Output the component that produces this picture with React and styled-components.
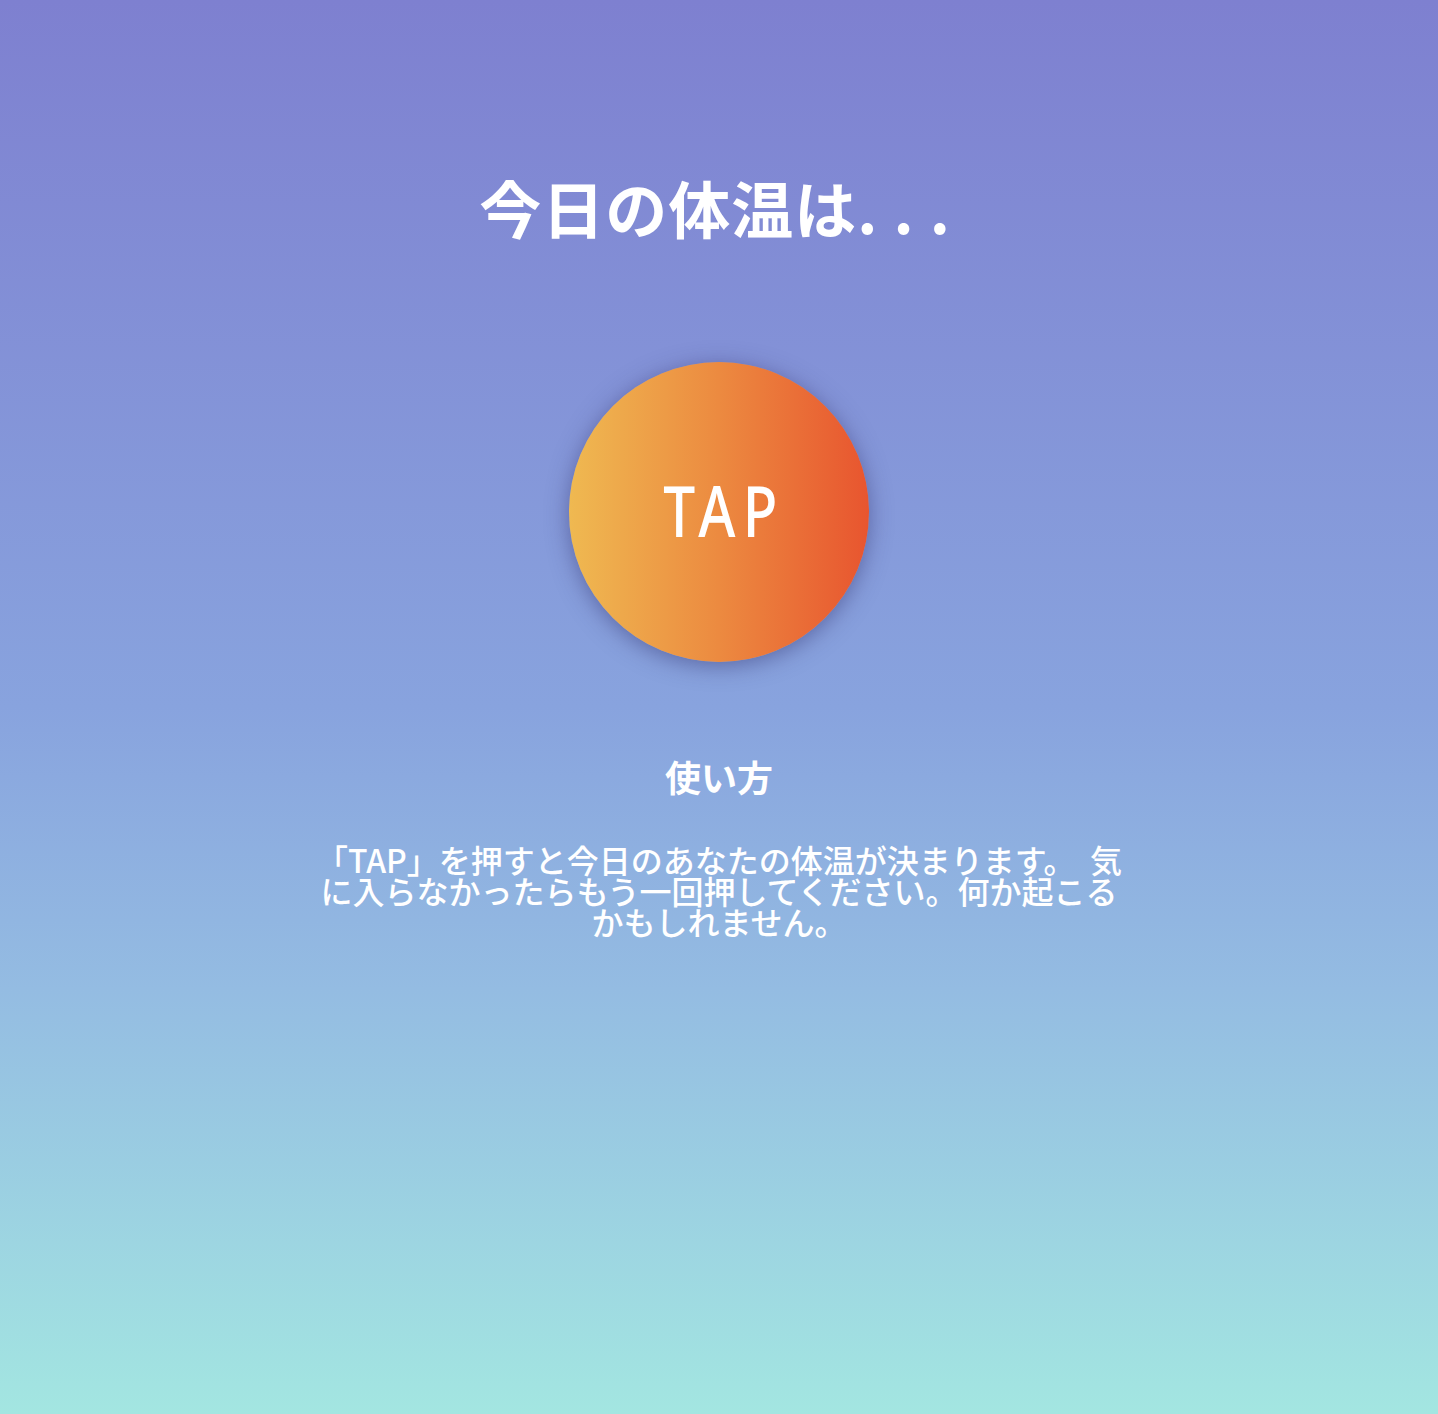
import React from 'react';
import styled, { createGlobalStyle } from 'styled-components';

const GlobalStyle = createGlobalStyle`
  html, body {
    margin: 0;
    padding: 0;
  }

  body {
    font-family: 'Noto Sans CJK JP', 'Noto Sans', sans-serif;
    color: #fff;
  }
`;

const Page = styled.main`
  min-height: 100vh;
  box-sizing: border-box;
  padding-top: 167px;
  display: flex;
  flex-direction: column;
  align-items: center;
  background: linear-gradient(180deg, #7e80d0 0%, #88a3de 50%, #94bce2 70%, #a3e6e1 100%);
`;

const Title = styled.h1`
  margin: 0 0 0 -8px;
  font-size: 62px;
  line-height: 80px;
  font-weight: 700;
  letter-spacing: 1px;
`;

const TapButton = styled.button`
  margin-top: 115px;
  width: 300px;
  height: 300px;
  display: flex;
  align-items: center;
  justify-content: center;
  border: none;
  border-radius: 50%;
  background: linear-gradient(90deg, #efb951 0%, #ec8a40 50%, #e8552f 100%);
  box-shadow: 0 4px 22px rgba(50, 50, 110, 0.5);
  color: #fff;
  cursor: pointer;
`;

const TapLabel = styled.span`
  display: inline-block;
  font-family: 'Noto Sans', sans-serif;
  font-size: 71px;
  font-weight: 500;
  line-height: 1;
  letter-spacing: 9px;
  margin: -6px -9px 0 0;
  transform: scaleX(0.8);
`;

const Heading = styled.h2`
  margin: 88px 0 0;
  font-size: 36px;
  line-height: 52px;
  font-weight: 700;
`;

const Text = styled.p`
  margin: 42px 0 0;
  width: 820px;
  font-size: 32px;
  line-height: 31px;
  font-weight: 500;
  text-align: center;
`;

export default function App() {
  return (
    <Page>
      <GlobalStyle />
      <Title>今日の体温は. . .</Title>
      <TapButton>
        <TapLabel>TAP</TapLabel>
      </TapButton>
      <Heading>使い方</Heading>
      <Text>
        「TAP」を押すと今日のあなたの体温が決まります。&nbsp; 気に入らなかったらもう一回押してください。何か起こるかもしれません。
      </Text>
    </Page>
  );
}
